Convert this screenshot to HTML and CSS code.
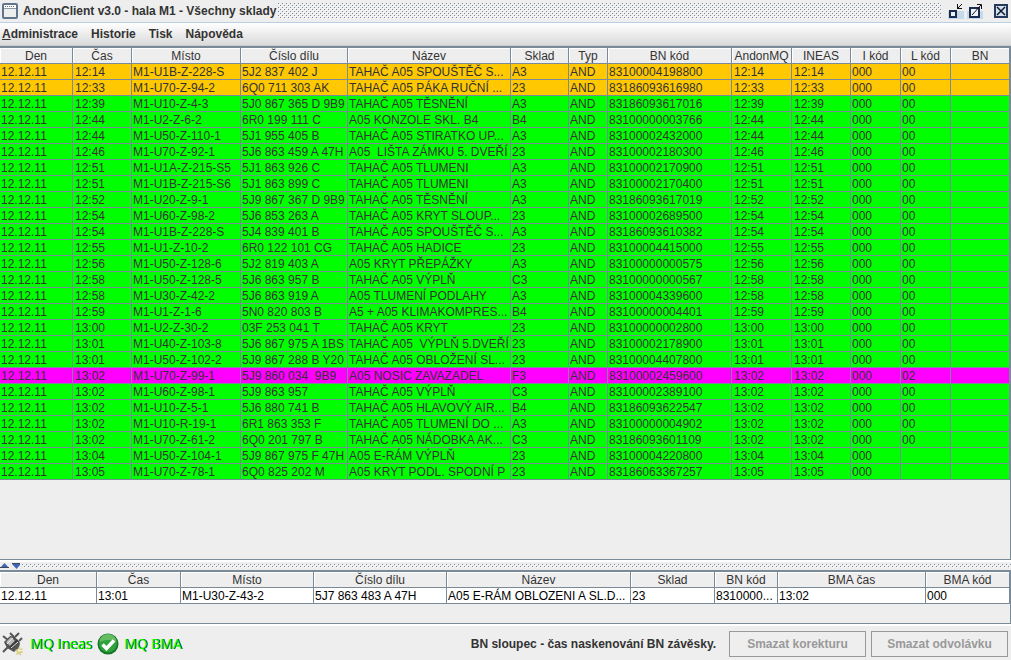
FILE: index.html
```
<!DOCTYPE html>
<html lang="cs">
<head>
<meta charset="utf-8">
<title>AndonClient v3.0 - hala M1 - Všechny sklady</title>
<link rel="stylesheet" href="styles.css">
</head>
<body>
<div class="window">
<header class="titlebar">
<svg class="app-icon" width="16" height="16" viewBox="0 0 16 16"><rect x="1" y="1" width="14" height="14" rx="1" fill="#eee" stroke="#61768b" stroke-width="2"/><path d="M2 2h12v3H2z" fill="#fff"/><path d="M3 3.5h10" stroke="#61768b" stroke-dasharray="1 1"/><path d="M2 5.5h12" stroke="#8b9baa"/></svg>
<h1 class="title">AndonClient v3.0 - hala M1 - Všechny sklady</h1>
<svg class="bumps" aria-hidden="true"><defs><pattern id="bumps" width="4" height="4" patternUnits="userSpaceOnUse"><path d="M0 0h1v1H0zM2 2h1v1H2z" fill="#7a8a99"/><path d="M1 1h1v1H1zM3 3h1v1H3z" fill="#fff"/></pattern></defs><rect width="100%" height="100%" fill="url(#bumps)"/></svg>
<div class="window-buttons">
<button class="window-button" aria-label="Minimalizovat"><svg width="16" height="16" viewBox="0 0 16 16" shape-rendering="crispEdges"><path d="M0 8h16v8H0z" fill="#c6d9eb"/><path d="M2 8h6v6H2z" fill="#eef3f8" stroke="#1c2c50" stroke-width="2"/><path d="M9 1v5h5v-1h-3v-1h1v-1h1v-1h1v-1h-1v1h-1v1h-1v1h-1V1z" fill="#111"/></svg></button>
<button class="window-button" aria-label="Maximalizovat"><svg width="16" height="16" viewBox="0 0 16 16"><path d="M0 8h16v8H0z" fill="#c6d9eb"/><path d="M3 5h9v9H3z" fill="#eef3f8" stroke="#1c2c50" stroke-width="2"/><path d="M5 12l9-10M10 1.500h4.500V6" fill="none" stroke="#111"/></svg></button>
<button class="window-button close" aria-label="Zavřít"><svg width="16" height="16" viewBox="0 0 16 16"><path d="M2 2h12v12H2z" fill="#d4e2ef" stroke="#26395d" stroke-width="2"/><path d="M4 4l8 8M12 4l-8 8" stroke="#10182c" stroke-width="1.500"/></svg></button>
</div>
</header>
<nav class="menubar">
<button class="menu"><u>A</u>dministrace</button>
<button class="menu">Historie</button>
<button class="menu">Tisk</button>
<button class="menu">Nápověda</button>
</nav>
<main class="panes">
<section class="pane main-pane">
<table class="grid orders">
<colgroup><col class="w73"><col class="w59"><col class="w109"><col class="w107"><col class="w163"><col class="w58"><col class="w39"><col class="w124"><col class="w60"><col class="w59"><col class="w50"><col class="w50"><col class="w59"></colgroup>
<thead><tr><th>Den<th>Čas<th>Místo<th>Číslo dílu<th>Název<th>Sklad<th>Typ<th>BN kód<th>AndonMQ<th>INEAS<th>I kód<th>L kód<th>BN</tr></thead>
<tbody>
<tr class="late"><td>12.12.11<td>12:14<td>M1-U1B-Z-228-S<td>5J2 837 402 J<td>TAHAČ A05 SPOUŠTĚČ S...<td>A3<td>AND<td>83100004198800<td>12:14<td>12:14<td>000<td>00<td></tr>
<tr class="late"><td>12.12.11<td>12:33<td>M1-U70-Z-94-2<td>6Q0 711 303 AK<td>TAHAČ A05 PÁKA RUČNÍ ...<td>23<td>AND<td>83186093616980<td>12:33<td>12:33<td>000<td>00<td></tr>
<tr><td>12.12.11<td>12:39<td>M1-U10-Z-4-3<td>5J0 867 365 D 9B9<td>TAHAČ A05 TĚSNĚNÍ<td>A3<td>AND<td>83186093617016<td>12:39<td>12:39<td>000<td>00<td></tr>
<tr><td>12.12.11<td>12:44<td>M1-U2-Z-6-2<td>6R0 199 111 C<td>A05 KONZOLE SKL. B4<td>B4<td>AND<td>83100000003766<td>12:44<td>12:44<td>000<td>00<td></tr>
<tr><td>12.12.11<td>12:44<td>M1-U50-Z-110-1<td>5J1 955 405 B<td>TAHAČ A05 STIRATKO UP...<td>A3<td>AND<td>83100002432000<td>12:44<td>12:44<td>000<td>00<td></tr>
<tr><td>12.12.11<td>12:46<td>M1-U70-Z-92-1<td>5J6 863 459 A 47H<td>A05  LIŠTA ZÁMKU 5. DVEŘÍ<td>23<td>AND<td>83100002180300<td>12:46<td>12:46<td>000<td>00<td></tr>
<tr><td>12.12.11<td>12:51<td>M1-U1A-Z-215-S5<td>5J1 863 926 C<td>TAHAČ A05 TLUMENI<td>A3<td>AND<td>83100002170900<td>12:51<td>12:51<td>000<td>00<td></tr>
<tr><td>12.12.11<td>12:51<td>M1-U1B-Z-215-S6<td>5J1 863 899 C<td>TAHAČ A05 TLUMENI<td>A3<td>AND<td>83100002170400<td>12:51<td>12:51<td>000<td>00<td></tr>
<tr><td>12.12.11<td>12:52<td>M1-U20-Z-9-1<td>5J9 867 367 D 9B9<td>TAHAČ A05 TĚSNĚNÍ<td>A3<td>AND<td>83186093617019<td>12:52<td>12:52<td>000<td>00<td></tr>
<tr><td>12.12.11<td>12:54<td>M1-U60-Z-98-2<td>5J6 853 263 A<td>TAHAČ A05 KRYT SLOUP...<td>23<td>AND<td>83100002689500<td>12:54<td>12:54<td>000<td>00<td></tr>
<tr><td>12.12.11<td>12:54<td>M1-U1B-Z-228-S<td>5J4 839 401 B<td>TAHAČ A05 SPOUŠTĚČ S...<td>A3<td>AND<td>83186093610382<td>12:54<td>12:54<td>000<td>00<td></tr>
<tr><td>12.12.11<td>12:55<td>M1-U1-Z-10-2<td>6R0 122 101 CG<td>TAHAČ A05 HADICE<td>23<td>AND<td>83100004415000<td>12:55<td>12:55<td>000<td>00<td></tr>
<tr><td>12.12.11<td>12:56<td>M1-U50-Z-128-6<td>5J2 819 403 A<td>A05 KRYT PŘEPÁŽKY<td>A3<td>AND<td>83100000000575<td>12:56<td>12:56<td>000<td>00<td></tr>
<tr><td>12.12.11<td>12:58<td>M1-U50-Z-128-5<td>5J6 863 957 B<td>TAHAČ A05 VÝPLŇ<td>C3<td>AND<td>83100000000567<td>12:58<td>12:58<td>000<td>00<td></tr>
<tr><td>12.12.11<td>12:58<td>M1-U30-Z-42-2<td>5J6 863 919 A<td>A05 TLUMENÍ PODLAHY<td>A3<td>AND<td>83100004339600<td>12:58<td>12:58<td>000<td>00<td></tr>
<tr><td>12.12.11<td>12:59<td>M1-U1-Z-1-6<td>5N0 820 803 B<td>A5 + A05 KLIMAKOMPRES...<td>B4<td>AND<td>83100000004401<td>12:59<td>12:59<td>000<td>00<td></tr>
<tr><td>12.12.11<td>13:00<td>M1-U2-Z-30-2<td>03F 253 041 T<td>TAHAČ A05 KRYT<td>23<td>AND<td>83100000002800<td>13:00<td>13:00<td>000<td>00<td></tr>
<tr><td>12.12.11<td>13:01<td>M1-U40-Z-103-8<td>5J6 867 975 A 1BS<td>TAHAČ A05  VÝPLŇ 5.DVEŘÍ<td>23<td>AND<td>83100002178900<td>13:01<td>13:01<td>000<td>00<td></tr>
<tr><td>12.12.11<td>13:01<td>M1-U50-Z-102-2<td>5J9 867 288 B Y20<td>TAHAČ A05 OBLOŽENÍ SL...<td>23<td>AND<td>83100004407800<td>13:01<td>13:01<td>000<td>00<td></tr>
<tr class="marked"><td>12.12.11<td>13:02<td>M1-U70-Z-99-1<td>5J9 860 034  9B9<td>A05 NOSIC ZAVAZADEL<td>F3<td>AND<td>83100002459600<td>13:02<td>13:02<td>000<td>02<td></tr>
<tr><td>12.12.11<td>13:02<td>M1-U60-Z-98-1<td>5J9 863 957<td>TAHAČ A05 VÝPLŇ<td>C3<td>AND<td>83100002389100<td>13:02<td>13:02<td>000<td>00<td></tr>
<tr><td>12.12.11<td>13:02<td>M1-U10-Z-5-1<td>5J6 880 741 B<td>TAHAČ A05 HLAVOVÝ AIR...<td>B4<td>AND<td>83186093622547<td>13:02<td>13:02<td>000<td>00<td></tr>
<tr><td>12.12.11<td>13:02<td>M1-U10-R-19-1<td>6R1 863 353 F<td>TAHAČ A05 TLUMENÍ DO ...<td>A3<td>AND<td>83100000004902<td>13:02<td>13:02<td>000<td>00<td></tr>
<tr><td>12.12.11<td>13:02<td>M1-U70-Z-61-2<td>6Q0 201 797 B<td>TAHAČ A05 NÁDOBKA AK...<td>C3<td>AND<td>83186093601109<td>13:02<td>13:02<td>000<td>00<td></tr>
<tr><td>12.12.11<td>13:04<td>M1-U50-Z-104-1<td>5J9 867 975 F 47H<td>A05 E-RÁM VÝPLŇ<td>23<td>AND<td>83100004220800<td>13:04<td>13:04<td>000<td><td></tr>
<tr><td>12.12.11<td>13:05<td>M1-U70-Z-78-1<td>6Q0 825 202 M<td>A05 KRYT PODL. SPODNÍ P<td>23<td>AND<td>83186063367257<td>13:05<td>13:05<td>000<td><td></tr>
</tbody>
</table>
</section>
<div class="splitter">
<svg width="20" height="10" viewBox="0 0 20 10"><path d="M0 7l4.500-5L9 7zM12 3h9l-4.500 5z" fill="#3f66b4"/><path d="M0 6.500h9M12 2.500h8" stroke="#39485c"/></svg>
<svg class="splitter-bumps" aria-hidden="true"><rect width="100%" height="100%" fill="url(#bumps)"/></svg>
</div>
<section class="pane lower-pane">
<table class="grid scans">
<colgroup><col class="w97"><col class="w84"><col class="w133"><col class="w133"><col class="w184"><col class="w84"><col class="w63"><col class="w148"><col class="w84"></colgroup>
<thead><tr><th>Den<th>Čas<th>Místo<th>Číslo dílu<th>Název<th>Sklad<th>BN kód<th>BMA čas<th>BMA kód</tr></thead>
<tbody><tr><td>12.12.11<td>13:01<td>M1-U30-Z-43-2<td>5J7 863 483 A 47H<td>A05 E-RÁM OBLOZENI A SL.D...<td>23<td>8310000...<td>13:02<td>000</tr></tbody>
</table>
</section>
</main>
<footer class="statusbar">
<div class="connection">
<svg width="24" height="24" viewBox="0 0 24 24"><path d="M2 4l5 4M9 1l4 4M14 5l4-4M18 9l3-3M2 20l5-5" stroke="#555" stroke-width="2"/><path d="M3 10l6-6 5 1 5 6-1 5-5 4-7-4z" fill="#555"/><path d="M5 10l5-5 4 4-5 5z" fill="#b9b9b9"/><path d="M8 15l8-8 2 3-7 7z" fill="#3a3a3a"/><path d="M6 12l6-6M10 16l7-6" stroke="#eee"/><path d="M18 14l1 3 3-1-2 3 3 1-3 1v3l-2-2-3 1 1-3-2-2 3-1z" fill="#d8cf8a"/><path d="M18 17v3M17 18.500h3" stroke="#fff8c0"/></svg>
<span class="connection-name">MQ Ineas</span>
</div>
<div class="connection">
<svg width="22" height="22" viewBox="0 0 22 22"><circle cx="11" cy="11" r="10.500" fill="#17752a"/><circle cx="11" cy="10.500" r="9" fill="#2fa23a"/><path d="M2.500 9a8.500 8 0 0 1 17 0q-8-4-17 0z" fill="#63bd60"/><path d="M5.500 11.500l4 4 7.500-8" fill="none" stroke="#fff" stroke-width="3.500"/></svg>
<span class="connection-name">MQ BMA</span>
</div>
<p class="hint">BN sloupec - čas naskenování BN závěsky.</p>
<button class="action" disabled>Smazat korekturu</button>
<button class="action" disabled>Smazat odvolávku</button>
</footer>
</div>
</body>
</html>
```
FILE: styles.css
```
* { box-sizing: border-box; }

body {
  margin: 0;
  background: #eee;
  color: #333;
  font: 12px/15px "Liberation Sans", Arial, sans-serif;
}

button { font: inherit; color: inherit; }

.window {
  display: flex;
  flex-direction: column;
  height: 100vh;
}

.titlebar {
  display: flex;
  align-items: center;
  height: 23px;
  padding: 0 2px;
  border-bottom: 1px solid #b8cfe5;
}

.app-icon { flex: none; }

.title {
  margin: 0 2px 0 5px;
  font-size: 12px;
  font-weight: bold;
  white-space: nowrap;
}

.bumps {
  flex: 1;
  min-width: 0;
  height: 16px;
}

.window-buttons {
  display: flex;
  gap: 3px;
  margin-left: 6px;
}

.window-button {
  display: flex;
  padding: 0;
  border: 0;
  background: none;
}

.window-button.close { margin-left: 7px; }

.menubar {
  display: flex;
  gap: 13px;
  height: 23px;
  padding: 0 2px;
  border-bottom: 1px solid #ccc;
  background: linear-gradient(#fff, #dadada);
}

.menu {
  padding: 0;
  border: 0;
  background: none;
  font-weight: bold;
}

.panes {
  display: flex;
  flex: 1;
  flex-direction: column;
  min-height: 0;
}

.pane {
  overflow: hidden;
  border: solid #7a8a99;
  border-width: 2px 1px 1px 0;
}

.main-pane { flex: 1; }
.lower-pane { height: 54px; }

.grid {
  width: 100%;
  border-collapse: separate;
  border-spacing: 0;
  table-layout: fixed;
}

.grid th,
.grid td {
  height: 16px;
  padding: 2px 0 0 1px;
  overflow: hidden;
  border: solid #7a8a99;
  border-width: 0 1px 1px 0;
  font-weight: normal;
  line-height: 13px;
  text-align: left;
  white-space: pre;
}

.grid th {
  padding: 2px 0 0;
  box-shadow: inset 1px 1px #fff;
  text-align: center;
}

.orders td { background: #0f0; }
.orders .late td { background: #ffc800; }
.orders .marked td { background: #f0f; }

.orders td:nth-child(2),
.orders td:nth-child(9),
.orders td:nth-child(10) { padding-left: 2px; }

.scans td {
  background: #fff;
  color: #000;
}

.w39 { width: 39px; }
.w50 { width: 50px; }
.w58 { width: 58px; }
.w59 { width: 59px; }
.w60 { width: 60px; }
.w63 { width: 63px; }
.w73 { width: 73px; }
.w84 { width: 84px; }
.w97 { width: 97px; }
.w107 { width: 107px; }
.w109 { width: 109px; }
.w124 { width: 124px; }
.w133 { width: 133px; }
.w148 { width: 148px; }
.w163 { width: 163px; }
.w184 { width: 184px; }

.splitter {
  display: flex;
  align-items: center;
  gap: 2px;
  height: 10px;
  border-top: 2px solid #fff;
}

.splitter-bumps {
  flex: 1;
  height: 4px;
}

.statusbar {
  display: flex;
  align-items: center;
  gap: 5px;
  height: 36px;
  padding: 2px 3px 0 1px;
  border-top: 2px solid #fff;
}

.connection {
  display: flex;
  align-items: center;
  gap: 5px;
}

.connection-name {
  color: #0f0;
  font: 14px/20px "Open Sans", sans-serif;
  text-shadow: 1px 0 #030;
}

.hint {
  margin: 0 8px 0 auto;
  font-weight: bold;
}

.action {
  width: 137px;
  height: 26px;
  padding: 0;
  border: 1px solid #999;
  background: #eee;
  color: #999;
  font-weight: bold;
}
```
